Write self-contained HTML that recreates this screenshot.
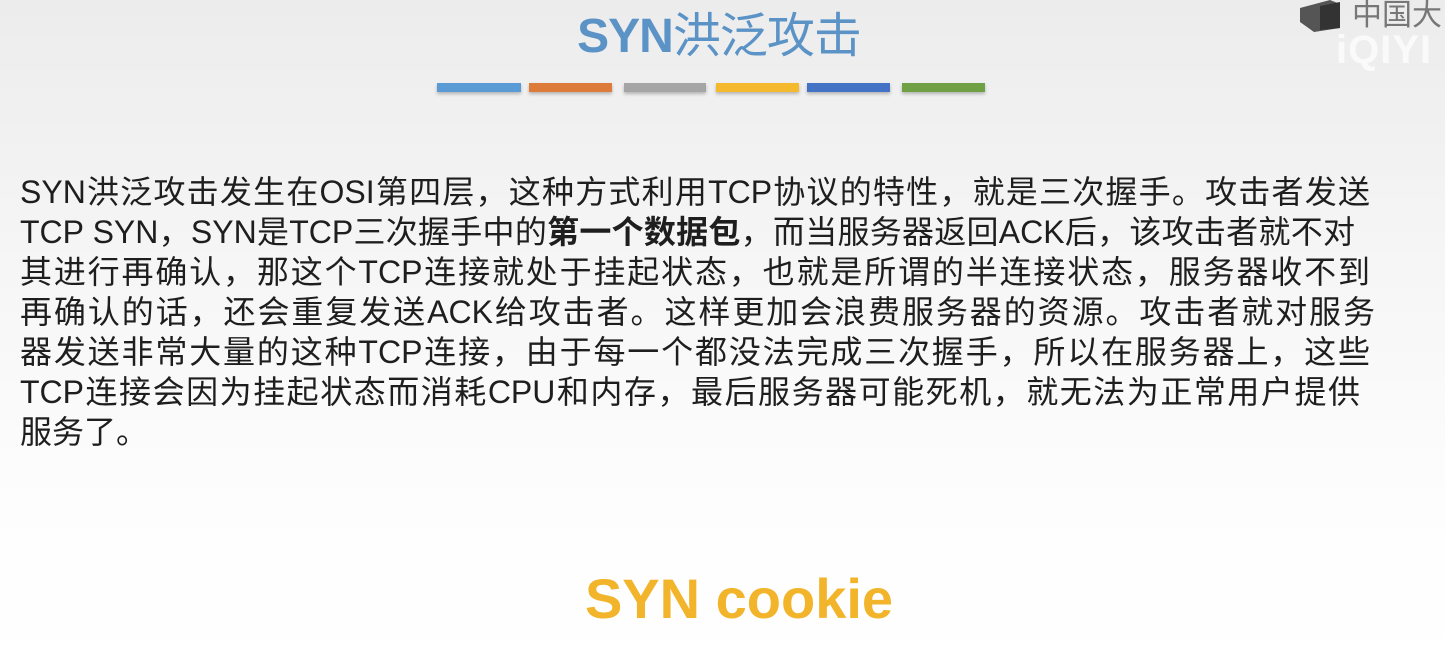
<!DOCTYPE html>
<html><head><meta charset="utf-8"><style>
html,body{margin:0;padding:0}
body{width:1445px;height:670px;overflow:hidden;position:relative;background:linear-gradient(#ececec 0%,#f6f6f6 40%,#fdfdfd 75%,#fff 100%);font-family:"Liberation Sans","Noto Sans CJK SC",sans-serif}
.title{position:absolute;left:0;width:1438px;text-align:center;top:-4px;font-size:48px;color:#5b93c7;font-weight:bold;letter-spacing:-1px}
.title span{font-weight:normal}
.bar{position:absolute;top:83px;height:9px;box-shadow:0 2px 3px rgba(0,0,0,.25)}
.txt{position:absolute;left:20px;top:172px;font-size:32px;line-height:40px;color:#1e1e1e;white-space:nowrap}
.txt div{text-align:justify;text-align-last:justify;white-space:normal;height:40px}
.ck{position:absolute;left:0;width:1478px;text-align:center;top:566px;font-size:56px;font-weight:bold;color:#f2b42a}
.logo{position:absolute;left:1300px;top:0;width:145px;height:75px}
</style></head><body>
<div class="title">SYN<span>洪泛攻击</span></div>
<div class="bar" style="left:437px;width:84px;background:#5b9bd5"></div>
<div class="bar" style="left:529px;width:83px;background:#dd7b3a"></div>
<div class="bar" style="left:624px;width:82px;background:#a5a5a5"></div>
<div class="bar" style="left:716px;width:83px;background:#f5b92e"></div>
<div class="bar" style="left:807px;width:83px;background:#4472c4"></div>
<div class="bar" style="left:902px;width:83px;background:#70a044"></div>
<div class="txt">
<div style="width:1350px">SYN洪泛攻击发生在OSI第四层，这种方式利用TCP协议的特性，就是三次握手。攻击者发送</div>
<div style="width:1335px">TCP SYN，SYN是TCP三次握手中的<b>第一个数据包</b>，而当服务器返回ACK后，该攻击者就不对</div>
<div style="width:1350px">其进行再确认，那这个TCP连接就处于挂起状态，也就是所谓的半连接状态，服务器收不到</div>
<div style="width:1355px">再确认的话，还会重复发送ACK给攻击者。这样更加会浪费服务器的资源。攻击者就对服务</div>
<div style="width:1350px">器发送非常大量的这种TCP连接，由于每一个都没法完成三次握手，所以在服务器上，这些</div>
<div style="width:1340px">TCP连接会因为挂起状态而消耗CPU和内存，最后服务器可能死机，就无法为正常用户提供</div>
<div style="text-align-last:left">服务了。</div>
</div>
<div class="ck">SYN cookie</div>
<div class="logo">
<svg width="60" height="32" style="position:absolute;left:0;top:0"><path d="M0 8 L30 0 L40 4 L40 28 L14 32 L0 22Z" fill="#555"/><path d="M20 6 L40 2 L40 28 L20 30Z" fill="#333"/></svg>
<div style="position:absolute;left:52px;top:-10px;font-size:30px;color:#777;font-family:'Noto Sans CJK SC',sans-serif">中国大</div>
<div style="position:absolute;left:36px;top:28px;font-size:40px;color:#fafafa;font-weight:bold;letter-spacing:1px">iQIYI</div>
</div>
</body></html>
